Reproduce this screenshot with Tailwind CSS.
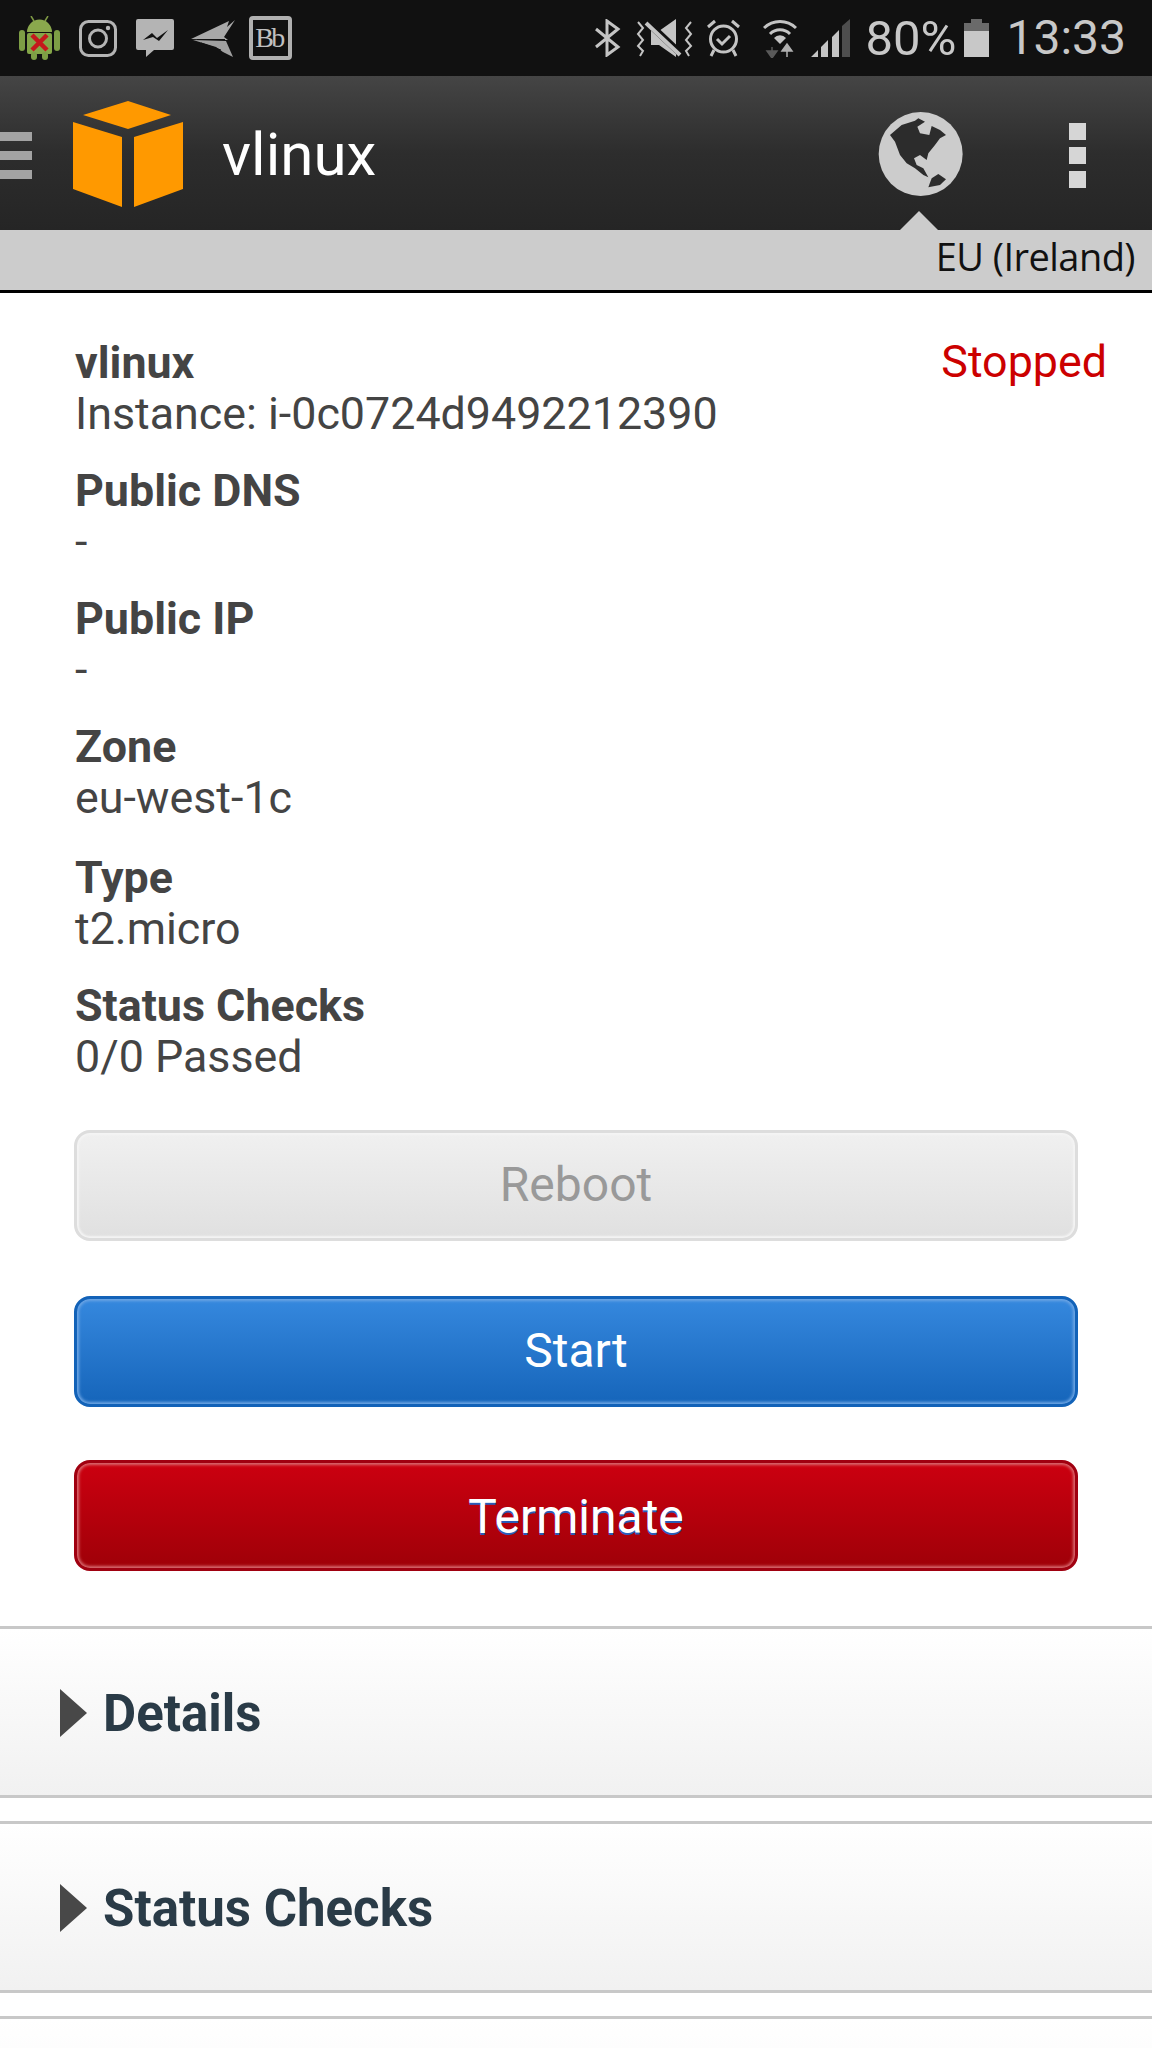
<!DOCTYPE html>
<html lang="en">
<head>
    <meta charset="UTF-8">
    <title>vlinux</title>
    <script src="https://cdn.jsdelivr.net/npm/@tailwindcss/browser@4"></script>
</head>
<body class="bg-white font-['Roboto',sans-serif] w-[1152px] h-[2048px] overflow-hidden">

    <!-- Android status bar -->
    <div class="h-[76px] bg-[#111111] flex items-center justify-between pl-[19px] pr-[26px]">
        <div class="flex items-center">
            <svg width="41" height="44" viewBox="0 0 41 44">
                <line x1="12" y1="0" x2="15" y2="5" stroke="#7f9a45" stroke-width="1.5"/>
                <line x1="29" y1="0" x2="26" y2="5" stroke="#7f9a45" stroke-width="1.5"/>
                <path d="M8 16a12.5 12.5 0 0 1 25 0z" fill="#8aa84d"/>
                <rect x="8" y="17" width="25" height="21" rx="2" fill="#84a648"/>
                <rect x="0" y="14" width="6" height="21" rx="3" fill="#7d9e45"/>
                <rect x="35" y="14" width="6" height="21" rx="3" fill="#7d9e45"/>
                <rect x="12" y="36" width="6" height="8" rx="3" fill="#7d9e45"/>
                <rect x="23" y="36" width="6" height="8" rx="3" fill="#7d9e45"/>
                <path d="M13 19l15 15M28 19L13 34" stroke="#c4181c" stroke-width="4.5"/>
            </svg>
            <svg width="38" height="37" viewBox="0 0 38 37" fill="none" stroke="#b4b4b4" class="ml-[19px]">
                <rect x="1.5" y="1.5" width="35" height="34" rx="8" stroke-width="3"/>
                <circle cx="19" cy="18.5" r="8.5" stroke-width="3"/>
                <circle cx="29" cy="8" r="2.2" fill="#b4b4b4" stroke="none"/>
            </svg>
            <svg width="38" height="38" viewBox="0 0 38 38" class="ml-[19px]">
                <path d="M2 0h34a2 2 0 0 1 2 2v27a2 2 0 0 1-2 2H18l-8 7v-7H2a2 2 0 0 1-2-2V2a2 2 0 0 1 2-2z" fill="#b4b4b4"/>
                <path d="M7 21l9-7 5 5 11-8-9 11-6-4z" fill="#111111"/>
            </svg>
            <svg width="44" height="37" viewBox="0 0 44 37" class="ml-[17px]">
                <path d="M0 19L38 1l-2 6L44 0 33 17l4 3z" fill="#a8a8a8"/>
                <path d="M2 20l33 1 7 16-10-5-7-5z" fill="#a0a0a0"/>
                <path d="M6 19.5h28M10 23l20 7" stroke="#111111" stroke-width="1"/>
            </svg>
            <div class="ml-[14px] w-[43px] h-[44px] border-[4px] border-[#b0b0b0] rounded-[4px] flex items-center justify-center font-['Liberation_Serif',serif] text-[28px] leading-none tracking-[-2.5px] text-[#c0c0c0] pr-[3px]">Bb</div>
        </div>
        <div class="flex items-center">
            <svg width="26" height="38" viewBox="0 0 26 38" fill="none" stroke="#c4c4c4" stroke-width="3">
                <path d="M1 10l22 18-11 8V2l11 8L1 28"/>
            </svg>
            <svg width="57" height="38" viewBox="0 0 57 38" class="ml-[15px]" fill="none" stroke="#c4c4c4">
                <path d="M15 12h8L40 0v38L23 26h-8z" fill="#c4c4c4" stroke="none"/>
                <path d="M11 3l34 32" stroke="#111111" stroke-width="7"/>
                <path d="M10 4l34 32" stroke-width="4"/>
                <path d="M2 3l5 6-5 6 5 6-5 6 5 5-3 5M55 3l-5 6 5 6-5 6 5 6-5 5 3 5" stroke-width="2"/>
            </svg>
            <svg width="35" height="38" viewBox="0 0 35 38" class="ml-[13px]" fill="none" stroke="#c4c4c4" stroke-width="3">
                <circle cx="17.5" cy="20" r="13"/>
                <path d="M11 20l5 5 8-8M2 8l7-6M33 8l-7-6M8 31l-3 6M27 31l3 6"/>
            </svg>
            <svg width="34" height="40" viewBox="0 0 34 40" class="ml-[22px]">
                <path d="M1 10a23 23 0 0 1 32 0" fill="none" stroke="#c4c4c4" stroke-width="3"/>
                <path d="M7 16a14 14 0 0 1 20 0" fill="none" stroke="#c4c4c4" stroke-width="3"/>
                <path d="M17 26l-6-6a8 8 0 0 1 12 0z" fill="#c4c4c4"/>
                <path d="M9 29v6M4 33h10l-5 7z" fill="#5a5a5a" stroke="#5a5a5a" stroke-width="1.5"/>
                <path d="M24 39v-6M19 33l5-7 5 7z" fill="#b0b0b0" stroke="#b0b0b0" stroke-width="1.5"/>
            </svg>
            <svg width="39" height="38" viewBox="0 0 39 38" class="ml-[14px]">
                <path d="M31 7l8-7v38h-8z" fill="#4e4e4e"/>
                <path d="M0 38l7-7v7zM10 38V28l7-7v17zM21 38V18l7-7v27z" fill="#c4c4c4"/>
            </svg>
            <span class="ml-[16px] text-[49px] leading-none text-[#c8c8c8]">80%</span>
            <div class="ml-[8px] w-[25px] h-[38px] flex flex-col items-center">
                <div class="w-[11px] h-[4px] bg-[#6a6a6a]"></div>
                <div class="w-[25px] h-[8px] bg-[#6a6a6a]"></div>
                <div class="w-[25px] h-[26px] bg-[#c8c8c8]"></div>
            </div>
            <span class="ml-[17px] text-[48px] leading-none text-[#c8c8c8]">13:33</span>
        </div>
    </div>

    <!-- App header -->
    <header class="relative h-[154px] bg-linear-to-b from-[#454545] via-[#2d2d2d] via-50% to-[#252525] flex items-center">
        <div class="w-[32px] flex flex-col gap-[10px] mt-[5px]">
            <div class="h-[9px] bg-[#a3a3a3]"></div>
            <div class="h-[9px] bg-[#a3a3a3]"></div>
            <div class="h-[9px] bg-[#a3a3a3]"></div>
        </div>
        <svg width="110" height="106" viewBox="0 0 110 106" class="ml-[41px] mt-[1px]">
            <path d="M55 0l43 14-43 14-45-14z" fill="#ff9900"/>
            <path d="M0 21l49 15v70L0 88z" fill="#ff9900"/>
            <path d="M110 21L61 36v70l49-18z" fill="#ff9900"/>
        </svg>
        <span class="ml-[39px] mt-[4px] text-[60px] font-normal leading-none text-white">vlinux</span>
        <svg width="120" height="120" viewBox="0 0 360 360" class="absolute left-[860px] top-[24px]">
            <circle cx="182" cy="162" r="126" fill="#cccccc"/>
            <path d="M90 105L125 75 165 62 175 55 195 65 172 80 180 100 208 105 215 78 240 90 258 105 240 115 225 135 205 160 200 180 180 165 162 175 170 195 190 205 205 232 190 225 165 205 140 190 120 165 105 125z" fill="#2c2c2c"/>
            <path d="M205 262L215 235 235 222 258 238 240 255z" fill="#2c2c2c"/>
        </svg>
        <div class="absolute left-[1069px] top-[47px] flex flex-col gap-[7px]">
            <div class="w-[17px] h-[17px] bg-[#d6d6d6]"></div>
            <div class="w-[17px] h-[17px] bg-[#d6d6d6]"></div>
            <div class="w-[17px] h-[17px] bg-[#d6d6d6]"></div>
        </div>
        <div class="absolute left-[900px] bottom-0 w-0 h-0 border-x-[19px] border-x-transparent border-b-[19px] border-b-[#cccccc]"></div>
    </header>

    <!-- Region bar -->
    <div class="h-[63px] bg-[#cccccc] border-b-[3px] border-black flex items-center justify-end pr-[17px] pb-[9px]">
        <span class="text-[38px] leading-none text-[#111111] font-['Open_Sans',sans-serif] tracking-[-0.55px]">EU (Ireland)</span>
    </div>

    <!-- Instance -->
    <main class="px-[74px] pt-[44px] text-[44.8px] leading-[51px] text-[#444444]">
        <div class="relative pl-[1px]">
            <p class="font-bold">vlinux</p>
            <p>Instance: i-0c0724d9492212390</p>
            <span class="absolute right-[-29px] top-[-1px] text-[#cc0000]">Stopped</span>
        </div>
        <div class="mt-[26px] pl-[1px]">
            <p class="font-bold">Public DNS</p>
            <p>-</p>
        </div>
        <div class="mt-[26px] pl-[1px]">
            <p class="font-bold">Public IP</p>
            <p>-</p>
        </div>
        <div class="mt-[26px] pl-[1px]">
            <p class="font-bold">Zone</p>
            <p>eu-west-1c</p>
        </div>
        <div class="mt-[29px] pl-[1px]">
            <p class="font-bold">Type</p>
            <p>t2.micro</p>
        </div>
        <div class="mt-[26px] pl-[1px]">
            <p class="font-bold">Status Checks</p>
            <p>0/0 Passed</p>
        </div>

        <div class="mt-[48px] flex flex-col gap-[55px]">
            <button class="h-[111px] pb-[2px] rounded-[16px] border-[3px] border-[#dddddd] bg-linear-to-b from-[#f0f0f0] to-[#e0e0e0] shadow-[inset_0_0_2px_2px_#f4f4f4] text-[#999999] text-[48px]">Reboot</button>
            <button class="h-[111px] pb-[2px] rounded-[16px] border-[3px] border-[#1262b8] bg-linear-to-b from-[#3588de] to-[#1565ba] shadow-[inset_0_0_3px_2px_#6fa6e4] text-white text-[48px]">Start</button>
            <button class="h-[111px] -mt-[2px] pt-[2px] rounded-[16px] border-[3px] border-[#a00010] bg-linear-to-b from-[#cc0010] to-[#9f0008] shadow-[inset_0_0_3px_2px_#d86a70] text-white text-[48px] [text-shadow:0_2px_0_#2a5db8]">Terminate</button>
        </div>
    </main>

    <!-- Collapsed sections -->
    <section class="mt-[55px] flex flex-col gap-[23px]">
        <div class="h-[172px] border-y-[3px] border-[#c8c8c8] bg-linear-to-b from-white to-[#f1f1f1] flex items-center pl-[60px] pt-[2px]">
            <div class="w-0 h-0 border-y-[24px] border-y-transparent border-l-[27px] border-l-[#484848]"></div>
            <span class="ml-[16px] font-bold text-[51px] leading-none text-[#2a3b47]">Details</span>
        </div>
        <div class="h-[172px] border-y-[3px] border-[#c8c8c8] bg-linear-to-b from-white to-[#f1f1f1] flex items-center pl-[60px] pt-[2px]">
            <div class="w-0 h-0 border-y-[24px] border-y-transparent border-l-[27px] border-l-[#484848]"></div>
            <span class="ml-[16px] font-bold text-[51px] leading-none text-[#2a3b47]">Status Checks</span>
        </div>
        <div class="h-[32px] border-t-[3px] border-[#c8c8c8] bg-linear-to-b from-white to-[#fdfdfd]"></div>
    </section>

</body>
</html>
